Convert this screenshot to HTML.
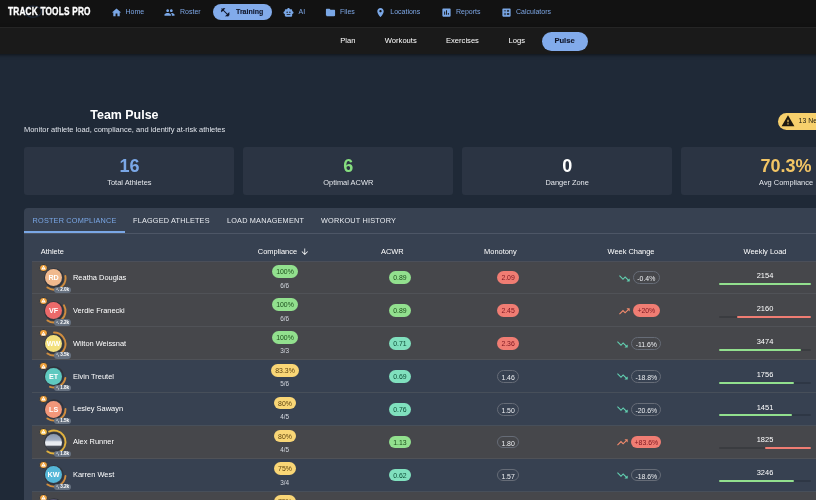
<!DOCTYPE html>
<html lang="en"><head><meta charset="utf-8"><title>Track Tools Pro - Team Pulse</title>
<style>
*{box-sizing:border-box;margin:0;padding:0}
html,body{width:816px;height:500px;overflow:hidden;background:#1f2937}
body{font-family:"Liberation Sans",Arial,sans-serif;color:#fff;position:relative}
#app{position:absolute;left:0;top:0;width:816px;height:500px;overflow:hidden;will-change:transform}
.abs,.ic,.t{position:absolute}
.t{white-space:nowrap;line-height:1}
.c{transform:translateX(-50%)}
.nav1{left:0;top:0;width:816px;height:27px;background:#121212}
.nav2{left:-10px;top:27px;width:836px;height:26.8px;background:#1a1a1a;border-top:1px solid #252525;box-shadow:0 1px 2px -.5px rgba(0,0,0,.25),0 2px 2.7px rgba(0,0,0,.16),0 .5px 5.3px rgba(0,0,0,.14)}
.nl{font-size:7px;color:#7da6e4;top:7.6px}
.sl{font-size:7.6px;color:#fff;top:37.1px}
.pill{border-radius:20px;background:#82abeb}
.card{top:146.8px;width:210.4px;height:47.8px;background:#2b3443;border-radius:3px}
.num{font-size:18px;font-weight:bold;top:156.8px}
.lab{font-size:7.44px;color:#e4e7ec;top:178.6px}
.panel{left:24px;top:208px;width:867px;height:320px;background:#374151;border-radius:4px 4px 0 0}
.tab{font-size:7.3px;top:216.7px;color:#e8ebf0;letter-spacing:.19px}
.th{font-size:7.44px;top:247.6px;color:#fff}
.row{left:32px;width:851px;height:32.86px;border-bottom:.7px solid rgba(96,99,106,.4)}
.hl{background:#46474b}
.name{font-size:7.44px;color:#fff;left:73px}
.chip{border-radius:10px;font-size:6.9px;text-align:center;color:rgba(0,0,0,.87);height:12.75px;line-height:14.4px}
.och{border:.55px solid #666c77;color:#eceef1;background:transparent;line-height:13.2px}
.sub{font-size:6.4px;color:#d5d9e0}
.val{font-size:7.44px;color:#fff}
.bar{height:2.1px;border-radius:1.1px}
.av{border-radius:50%;width:17.2px;height:17.2px;font-size:7.2px;font-weight:bold;color:#fff;text-align:center;line-height:17.2px}
.kp{border-radius:4px;background:#677281;height:6.4px;width:17.4px}
</style></head>
<body><div id="app">
<div class="abs nav1"></div><div class="abs nav2"></div>
<svg class="ic" style="left:22px;top:4px;width:28px;height:16px" viewBox="0 0 28 16"><ellipse cx="11" cy="7.6" rx="8.5" ry="5.6" fill="none" stroke="#1d293b" stroke-width="1.1"/></svg>
<div class="t" id="logo" style="left:8px;top:6.8px;font-size:10.3px;font-weight:bold;color:#fff;transform-origin:0 0;transform:scaleX(.802);letter-spacing:.25px;-webkit-text-stroke:.35px #fff">TRACK TOOLS PRO</div>
<div class="abs pill" style="left:213px;top:4px;width:59px;height:16px"></div>
<svg class="ic" style="left:110.8px;top:6.9px;width:11px;height:11px" viewBox="0 0 24 24"><path fill="#7aa7e6" d="M10 20v-6h4v6h5v-8h3L12 3 2 12h3v8z"/></svg>
<div class="t nl" style="left:125.5px">Home</div>
<svg class="ic" style="left:164px;top:6.9px;width:11px;height:11px" viewBox="0 0 24 24"><path fill="#7aa7e6" d="M16 11c1.66 0 2.99-1.34 2.99-3S17.66 5 16 5c-1.66 0-3 1.34-3 3s1.34 3 3 3zm-8 0c1.66 0 2.99-1.34 2.99-3S9.66 5 8 5C6.34 5 5 6.34 5 8s1.34 3 3 3zm0 2c-2.33 0-7 1.17-7 3.5V19h14v-2.5c0-2.33-4.67-3.5-7-3.5zm8 0c-.29 0-.62.02-.97.05 1.16.84 1.97 1.97 1.97 3.45V19h6v-2.5c0-2.33-4.67-3.5-7-3.5z"/></svg>
<div class="t nl" style="left:180px">Roster</div>
<svg class="ic" style="left:283.3px;top:6.9px;width:11px;height:11px" viewBox="0 0 24 24"><path fill="#7aa7e6" d="M20 9V7c0-1.1-.9-2-2-2h-3c0-1.66-1.34-3-3-3S9 3.34 9 5H6c-1.1 0-2 .9-2 2v2c-1.66 0-3 1.34-3 3s1.34 3 3 3v4c0 1.1.9 2 2 2h12c1.1 0 2-.9 2-2v-4c1.66 0 3-1.34 3-3s-1.34-3-3-3zM7.5 11.5c0-.83.67-1.5 1.5-1.5s1.5.67 1.5 1.5S9.83 13 9 13s-1.5-.67-1.5-1.5zM16 17H8v-2h8v2zm-1-4c-.83 0-1.5-.67-1.5-1.5S14.17 10 15 10s1.5.67 1.5 1.5S15.83 13 15 13z"/></svg>
<div class="t nl" style="left:298.5px">AI</div>
<svg class="ic" style="left:324.9px;top:6.9px;width:11px;height:11px" viewBox="0 0 24 24"><path fill="#7aa7e6" d="M10 4H4c-1.1 0-1.99.9-1.99 2L2 18c0 1.1.9 2 2 2h16c1.1 0 2-.9 2-2V8c0-1.1-.9-2-2-2h-8l-2-2z"/></svg>
<div class="t nl" style="left:340px">Files</div>
<svg class="ic" style="left:375.1px;top:6.9px;width:11px;height:11px" viewBox="0 0 24 24"><path fill="#7aa7e6" d="M12 2C8.13 2 5 5.13 5 9c0 5.25 7 13 7 13s7-7.75 7-13c0-3.870-3.13-7-7-7zm0 9.5c-1.38 0-2.5-1.12-2.5-2.5s1.12-2.5 2.5-2.5 2.5 1.12 2.5 2.5-1.12 2.5-2.5 2.5z"/></svg>
<div class="t nl" style="left:390.3px">Locations</div>
<svg class="ic" style="left:440.75px;top:6.9px;width:11px;height:11px" viewBox="0 0 24 24"><path fill="#7aa7e6" d="M19 3H5c-1.1 0-2 .9-2 2v14c0 1.1.9 2 2 2h14c1.1 0 2-.9 2-2V5c0-1.1-.9-2-2-2zM9 17H7v-7h2v7zm4 0h-2V7h2v10zm4 0h-2v-4h2v4z"/></svg>
<div class="t nl" style="left:456px">Reports</div>
<svg class="ic" style="left:500.75px;top:6.9px;width:11px;height:11px" viewBox="0 0 24 24"><path fill="#7aa7e6" d="M19 3H5c-1.1 0-2 .9-2 2v14c0 1.1.9 2 2 2h14c1.1 0 2-.9 2-2V5c0-1.1-.9-2-2-2zm-5.970 4.060L14.090 6l1.410 1.410L16.910 6l1.060 1.060-1.410 1.410 1.410 1.410-1.060 1.060-1.410-1.400-1.410 1.410-1.060-1.060 1.410-1.410-1.410-1.420zm-6.780.66h5v1.500h-5v-1.500zM11.500 16h-2v2H8v-2H6v-1.500h2v-2h1.500v2h2V16zm6.500 1.250h-5v-1.500h5v1.500zm0-2.500h-5v-1.500h5v1.500z"/></svg>
<div class="t nl" style="left:516px">Calculators</div>
<svg class="ic" style="left:220.4px;top:6.9px;width:10.6px;height:10.6px" viewBox="0 0 24 24"><path fill="#10162a" d="M20.57 14.86L22 13.43 20.57 12 17 15.57 8.43 7 12 3.43 10.57 2 9.14 3.43 7.71 2 5.57 4.14 4.14 2.71 2.71 4.14l1.43 1.43L2 7.71l1.43 1.43L2 10.57 3.43 12 7 8.43 15.57 17 12 20.57 13.43 22l1.43-1.43L16.29 22l2.14-2.14 1.43 1.43 1.43-1.43-1.43-1.43L22 16.29z"/></svg>
<div class="t nl" style="left:236px;color:#10162a;font-weight:bold;-webkit-text-stroke:.12px #10162a">Training</div>
<div class="t sl" style="left:340.2px">Plan</div>
<div class="t sl" style="left:384.8px">Workouts</div>
<div class="t sl" style="left:446px">Exercises</div>
<div class="t sl" style="left:508.5px">Logs</div>
<div class="abs pill" style="left:542.2px;top:31.8px;width:45.8px;height:18.8px"></div>
<div class="t sl" style="left:554.4px;color:#10162a;font-weight:bold;-webkit-text-stroke:.12px #10162a">Pulse</div>
<div class="t" style="left:90.3px;top:109.4px;font-size:12.45px;font-weight:bold;color:#fff">Team Pulse</div>
<div class="t" style="left:23.9px;top:125.5px;font-size:7.5px;color:#dfe3ea">Monitor athlete load, compliance, and identify at-risk athletes</div>
<div class="abs" style="left:777.7px;top:112.6px;width:80px;height:17px;border-radius:9px;background:#f7d06c"></div>
<svg class="ic" style="left:780.9px;top:114.2px;width:14px;height:14px" viewBox="0 0 24 24"><path fill="#1f1a10" d="M1 21h22L12 2 1 21zm12-3h-2v-2h2v2zm0-4h-2v-4h2v4z"/></svg>
<div class="t" style="left:798.6px;top:118.2px;font-size:6.9px;color:rgba(0,0,0,.87)">13 Needs Attention</div>
<div class="abs card" style="left:24px"></div>
<div class="t num c" style="left:129.4px;color:#7aa7e6">16</div>
<div class="t lab c" style="left:129.4px">Total Athletes</div>
<div class="abs card" style="left:242.9px"></div>
<div class="t num c" style="left:348.3px;color:#86dd7f">6</div>
<div class="t lab c" style="left:348.3px">Optimal ACWR</div>
<div class="abs card" style="left:461.8px"></div>
<div class="t num c" style="left:567.2px;color:#fff">0</div>
<div class="t lab c" style="left:567.2px">Danger Zone</div>
<div class="abs card" style="left:680.7px"></div>
<div class="t num c" style="left:786.1px;color:#f2c565">70.3%</div>
<div class="t lab c" style="left:786.1px">Avg Compliance</div>
<div class="abs panel"></div>
<div class="abs" style="left:24px;top:232.6px;width:867px;height:.8px;background:#4d5666"></div>
<div class="abs" style="left:24px;top:231px;width:100.6px;height:1.7px;background:#7aa7e6"></div>
<div class="t tab" style="left:32.6px;color:#7aa7e6">ROSTER COMPLIANCE</div>
<div class="t tab" style="left:133px;color:#e8ebf0">FLAGGED ATHLETES</div>
<div class="t tab" style="left:227px;color:#e8ebf0">LOAD MANAGEMENT</div>
<div class="t tab" style="left:321px;color:#e8ebf0">WORKOUT HISTORY</div>
<div class="t th" style="left:40.8px">Athlete</div>
<div class="t th" style="left:257.8px">Compliance</div>
<svg class="ic" style="left:300.1px;top:247px;width:9.56px;height:9.56px" viewBox="0 0 24 24"><path fill="#fff" d="M20 12l-1.410-1.410L13 16.170V4h-2v12.170l-5.580-5.590L4 12l8 8 8-8z"/></svg>
<div class="t th c" style="left:392.3px">ACWR</div>
<div class="t th c" style="left:500.4px">Monotony</div>
<div class="t th c" style="left:631px">Week Change</div>
<div class="t th c" style="left:765px">Weekly Load</div>
<div class="abs" style="left:32px;top:260.9px;width:851px;height:1px;background:#4b4f59"></div>
<div class="abs row hl" style="top:261.60px"></div>
<svg class="ic" style="left:40.6px;top:264.8px;width:26px;height:26px" viewBox="-13 -13 26 26"><circle r="9.2" fill="none" stroke="#30333a" stroke-width="1.3"/><path d="M11.33 -2.00A11.5 11.5 0 0 1 -6.60 9.42" fill="none" stroke="#d08d3e" stroke-width="1.9" stroke-linecap="round"/></svg>
<div class="abs av" style="left:45.0px;top:269.2px;background:#f0b98e">RD</div>
<div class="abs" style="left:39.449999999999996px;top:263.6px;width:8.2px;height:8.2px;border-radius:50%;background:#f0a23c;border:.6px solid #33373f"></div>
<svg class="ic" style="left:41.05px;top:265.0px;width:5px;height:5px" viewBox="0 0 24 24"><path fill="#fff" d="M1 21h22L12 2 1 21zm12-3h-2v-2h2v2zm0-4h-2v-4h2v4z"/></svg>
<div class="abs kp" style="left:53.5px;top:286.5px"></div>
<svg class="ic" style="left:55.6px;top:287.7px;width:3.8px;height:3.8px" viewBox="0 0 24 24"><path fill="#e8ebef" d="M20.57 14.86L22 13.43 20.57 12 17 15.57 8.43 7 12 3.43 10.57 2 9.14 3.43 7.71 2 5.57 4.14 4.14 2.71 2.71 4.14l1.43 1.43L2 7.71l1.43 1.43L2 10.57 3.43 12 7 8.43 15.57 17 12 20.57 13.43 22l1.43-1.43L16.29 22l2.14-2.14 1.43 1.43 1.43-1.43-1.43-1.43L22 16.29z"/></svg>
<div class="t" style="left:60.2px;top:287.7px;font-size:4.6px;font-weight:bold;color:#fff">2.0k</div>
<div class="t name" style="top:273.9px">Reatha Douglas</div>
<div class="abs chip" style="left:271.8px;top:265.3px;width:26.4px;background:#92e08e;color:#1c4f1c">100%</div>
<div class="t sub c" style="left:284.7px;top:282.6px">6/6</div>
<div class="abs chip" style="left:388.79999999999995px;top:271.4px;width:22.2px;background:#92e08e;color:#1c4f1c">0.89</div>
<div class="abs chip" style="left:497.20000000000005px;top:271.4px;width:21.8px;background:#f07d73;color:#7d1620">2.09</div>
<div class="abs chip och" style="left:633.08px;top:271.4px;width:26.5px;">-0.4%</div>
<svg class="ic" style="left:617.78px;top:271.8px;width:12.75px;height:12.75px" viewBox="0 0 24 24"><path fill="#62d2b2" d="M16 18l2.290-2.290-4.880-4.880-4 4L2 7.410 3.410 6l6 6 4-4 6.300 6.290L22 12v6z"/></svg>
<div class="t val c" style="left:765px;top:272.1px">2154</div>
<div class="abs bar" style="left:719px;top:283.0px;width:92px;background:rgba(20,22,28,.22)"></div>
<div class="abs bar" style="left:719px;top:283.0px;width:92px;background:#92e08e"></div>
<div class="abs row hl" style="top:294.46px"></div>
<svg class="ic" style="left:40.6px;top:297.7px;width:26px;height:26px" viewBox="-13 -13 26 26"><circle r="9.2" fill="none" stroke="#30333a" stroke-width="1.3"/><path d="M9.96 -5.75A11.5 11.5 0 0 1 -6.60 9.42" fill="none" stroke="#d08d3e" stroke-width="1.9" stroke-linecap="round"/></svg>
<div class="abs av" style="left:45.0px;top:302.1px;background:#ec6a6a">VF</div>
<div class="abs" style="left:39.449999999999996px;top:296.5px;width:8.2px;height:8.2px;border-radius:50%;background:#f0a23c;border:.6px solid #33373f"></div>
<svg class="ic" style="left:41.05px;top:297.9px;width:5px;height:5px" viewBox="0 0 24 24"><path fill="#fff" d="M1 21h22L12 2 1 21zm12-3h-2v-2h2v2zm0-4h-2v-4h2v4z"/></svg>
<div class="abs kp" style="left:53.5px;top:319.4px"></div>
<svg class="ic" style="left:55.6px;top:320.6px;width:3.8px;height:3.8px" viewBox="0 0 24 24"><path fill="#e8ebef" d="M20.57 14.86L22 13.43 20.57 12 17 15.57 8.43 7 12 3.43 10.57 2 9.14 3.43 7.71 2 5.57 4.14 4.14 2.71 2.71 4.14l1.43 1.43L2 7.71l1.43 1.43L2 10.57 3.43 12 7 8.43 15.57 17 12 20.57 13.43 22l1.43-1.43L16.29 22l2.14-2.14 1.43 1.43 1.43-1.43-1.43-1.43L22 16.29z"/></svg>
<div class="t" style="left:60.2px;top:320.6px;font-size:4.6px;font-weight:bold;color:#fff">2.2k</div>
<div class="t name" style="top:306.8px">Verdie Franecki</div>
<div class="abs chip" style="left:271.8px;top:298.2px;width:26.4px;background:#92e08e;color:#1c4f1c">100%</div>
<div class="t sub c" style="left:284.7px;top:315.5px">6/6</div>
<div class="abs chip" style="left:388.79999999999995px;top:304.3px;width:22.2px;background:#92e08e;color:#1c4f1c">0.89</div>
<div class="abs chip" style="left:497.20000000000005px;top:304.3px;width:21.8px;background:#f07d73;color:#7d1620">2.45</div>
<div class="abs chip" style="left:633.08px;top:304.3px;width:26.5px;background:#f07d73;color:#7d1620">+20%</div>
<svg class="ic" style="left:617.78px;top:304.7px;width:12.75px;height:12.75px" viewBox="0 0 24 24"><path fill="#f08a6c" d="M16 6l2.290 2.290-4.880 4.880-4-4L2 16.590 3.410 18l6-6 4 4 6.300-6.290L22 12V6z"/></svg>
<div class="t val c" style="left:765px;top:305.0px">2160</div>
<div class="abs bar" style="left:719px;top:315.9px;width:92px;background:rgba(20,22,28,.22)"></div>
<div class="abs bar" style="left:737px;top:315.9px;width:74px;background:#f07d73"></div>
<div class="abs row hl" style="top:327.31px"></div>
<svg class="ic" style="left:40.6px;top:330.5px;width:26px;height:26px" viewBox="-13 -13 26 26"><circle r="9.2" fill="none" stroke="#30333a" stroke-width="1.3"/><path d="M0.00 -11.50A11.5 11.5 0 1 1 -6.60 9.42" fill="none" stroke="#d08d3e" stroke-width="1.9" stroke-linecap="round"/></svg>
<div class="abs av" style="left:45.0px;top:334.9px;background:#f3e07c">WW</div>
<div class="abs" style="left:39.449999999999996px;top:329.3px;width:8.2px;height:8.2px;border-radius:50%;background:#f0a23c;border:.6px solid #33373f"></div>
<svg class="ic" style="left:41.05px;top:330.7px;width:5px;height:5px" viewBox="0 0 24 24"><path fill="#fff" d="M1 21h22L12 2 1 21zm12-3h-2v-2h2v2zm0-4h-2v-4h2v4z"/></svg>
<div class="abs kp" style="left:53.5px;top:352.2px"></div>
<svg class="ic" style="left:55.6px;top:353.4px;width:3.8px;height:3.8px" viewBox="0 0 24 24"><path fill="#e8ebef" d="M20.57 14.86L22 13.43 20.57 12 17 15.57 8.43 7 12 3.43 10.57 2 9.14 3.43 7.71 2 5.57 4.14 4.14 2.71 2.71 4.14l1.43 1.43L2 7.71l1.43 1.43L2 10.57 3.43 12 7 8.43 15.57 17 12 20.57 13.43 22l1.43-1.43L16.29 22l2.14-2.14 1.43 1.43 1.43-1.43-1.43-1.43L22 16.29z"/></svg>
<div class="t" style="left:60.2px;top:353.4px;font-size:4.6px;font-weight:bold;color:#fff">3.5k</div>
<div class="t name" style="top:339.6px">Wilton Weissnat</div>
<div class="abs chip" style="left:271.8px;top:331.0px;width:26.4px;background:#92e08e;color:#1c4f1c">100%</div>
<div class="t sub c" style="left:284.7px;top:348.3px">3/3</div>
<div class="abs chip" style="left:388.79999999999995px;top:337.1px;width:22.2px;background:#80e0be;color:#0d4f38">0.71</div>
<div class="abs chip" style="left:497.20000000000005px;top:337.1px;width:21.8px;background:#f07d73;color:#7d1620">2.36</div>
<div class="abs chip och" style="left:631.38px;top:337.1px;width:29.9px;">-11.6%</div>
<svg class="ic" style="left:616.08px;top:337.5px;width:12.75px;height:12.75px" viewBox="0 0 24 24"><path fill="#62d2b2" d="M16 18l2.290-2.290-4.880-4.880-4 4L2 7.410 3.410 6l6 6 4-4 6.300 6.290L22 12v6z"/></svg>
<div class="t val c" style="left:765px;top:337.8px">3474</div>
<div class="abs bar" style="left:719px;top:348.7px;width:92px;background:rgba(20,22,28,.22)"></div>
<div class="abs bar" style="left:719px;top:348.7px;width:82px;background:#92e08e"></div>
<div class="abs row" style="top:360.17px"></div>
<svg class="ic" style="left:40.6px;top:363.4px;width:26px;height:26px" viewBox="-13 -13 26 26"><circle r="9.2" fill="none" stroke="#30333a" stroke-width="1.3"/><path d="M11.33 2.00A11.5 11.5 0 0 1 -3.93 10.81" fill="none" stroke="#d08d3e" stroke-width="1.9" stroke-linecap="round"/></svg>
<div class="abs av" style="left:45.0px;top:367.8px;background:#5fc9c0">ET</div>
<div class="abs" style="left:39.449999999999996px;top:362.2px;width:8.2px;height:8.2px;border-radius:50%;background:#f0a23c;border:.6px solid #33373f"></div>
<svg class="ic" style="left:41.05px;top:363.6px;width:5px;height:5px" viewBox="0 0 24 24"><path fill="#fff" d="M1 21h22L12 2 1 21zm12-3h-2v-2h2v2zm0-4h-2v-4h2v4z"/></svg>
<div class="abs kp" style="left:53.5px;top:385.1px"></div>
<svg class="ic" style="left:55.6px;top:386.3px;width:3.8px;height:3.8px" viewBox="0 0 24 24"><path fill="#e8ebef" d="M20.57 14.86L22 13.43 20.57 12 17 15.57 8.43 7 12 3.43 10.57 2 9.14 3.43 7.71 2 5.57 4.14 4.14 2.71 2.71 4.14l1.43 1.43L2 7.71l1.43 1.43L2 10.57 3.43 12 7 8.43 15.57 17 12 20.57 13.43 22l1.43-1.43L16.29 22l2.14-2.14 1.43 1.43 1.43-1.43-1.43-1.43L22 16.29z"/></svg>
<div class="t" style="left:60.2px;top:386.3px;font-size:4.6px;font-weight:bold;color:#fff">1.8k</div>
<div class="t name" style="top:372.5px">Elvin Treutel</div>
<div class="abs chip" style="left:270.75px;top:363.9px;width:28.5px;background:#f9d676;color:#5e4410">83.3%</div>
<div class="t sub c" style="left:284.7px;top:381.2px">5/6</div>
<div class="abs chip" style="left:388.79999999999995px;top:370.0px;width:22.2px;background:#80e0be;color:#0d4f38">0.69</div>
<div class="abs chip och" style="left:497.20000000000005px;top:370.0px;width:21.8px;">1.46</div>
<div class="abs chip och" style="left:631.38px;top:370.0px;width:29.9px;">-18.8%</div>
<svg class="ic" style="left:616.08px;top:370.4px;width:12.75px;height:12.75px" viewBox="0 0 24 24"><path fill="#62d2b2" d="M16 18l2.290-2.290-4.880-4.880-4 4L2 7.410 3.410 6l6 6 4-4 6.300 6.290L22 12v6z"/></svg>
<div class="t val c" style="left:765px;top:370.7px">1756</div>
<div class="abs bar" style="left:719px;top:381.6px;width:92px;background:rgba(20,22,28,.22)"></div>
<div class="abs bar" style="left:719px;top:381.6px;width:75px;background:#92e08e"></div>
<div class="abs row" style="top:393.03px"></div>
<svg class="ic" style="left:40.6px;top:396.2px;width:26px;height:26px" viewBox="-13 -13 26 26"><circle r="9.2" fill="none" stroke="#30333a" stroke-width="1.3"/><path d="M11.50 -0.00A11.5 11.5 0 0 1 -6.60 9.42" fill="none" stroke="#d08d3e" stroke-width="1.9" stroke-linecap="round"/></svg>
<div class="abs av" style="left:45.0px;top:400.6px;background:#f2977a">LS</div>
<div class="abs" style="left:39.449999999999996px;top:395.0px;width:8.2px;height:8.2px;border-radius:50%;background:#f0a23c;border:.6px solid #33373f"></div>
<svg class="ic" style="left:41.05px;top:396.4px;width:5px;height:5px" viewBox="0 0 24 24"><path fill="#fff" d="M1 21h22L12 2 1 21zm12-3h-2v-2h2v2zm0-4h-2v-4h2v4z"/></svg>
<div class="abs kp" style="left:53.5px;top:417.9px"></div>
<svg class="ic" style="left:55.6px;top:419.1px;width:3.8px;height:3.8px" viewBox="0 0 24 24"><path fill="#e8ebef" d="M20.57 14.86L22 13.43 20.57 12 17 15.57 8.43 7 12 3.43 10.57 2 9.14 3.43 7.71 2 5.57 4.14 4.14 2.71 2.71 4.14l1.43 1.43L2 7.71l1.43 1.43L2 10.57 3.43 12 7 8.43 15.57 17 12 20.57 13.43 22l1.43-1.43L16.29 22l2.14-2.14 1.43 1.43 1.43-1.43-1.43-1.43L22 16.29z"/></svg>
<div class="t" style="left:60.2px;top:419.1px;font-size:4.6px;font-weight:bold;color:#fff">1.5k</div>
<div class="t name" style="top:405.3px">Lesley Sawayn</div>
<div class="abs chip" style="left:273.8px;top:396.7px;width:22.4px;background:#f9d676;color:#5e4410">80%</div>
<div class="t sub c" style="left:284.7px;top:414.0px">4/5</div>
<div class="abs chip" style="left:388.79999999999995px;top:402.8px;width:22.2px;background:#80e0be;color:#0d4f38">0.76</div>
<div class="abs chip och" style="left:497.20000000000005px;top:402.8px;width:21.8px;">1.50</div>
<div class="abs chip och" style="left:631.38px;top:402.8px;width:29.9px;">-20.6%</div>
<svg class="ic" style="left:616.08px;top:403.2px;width:12.75px;height:12.75px" viewBox="0 0 24 24"><path fill="#62d2b2" d="M16 18l2.290-2.290-4.880-4.880-4 4L2 7.410 3.410 6l6 6 4-4 6.300 6.290L22 12v6z"/></svg>
<div class="t val c" style="left:765px;top:403.5px">1451</div>
<div class="abs bar" style="left:719px;top:414.4px;width:92px;background:rgba(20,22,28,.22)"></div>
<div class="abs bar" style="left:719px;top:414.4px;width:73px;background:#92e08e"></div>
<div class="abs row hl" style="top:425.88px"></div>
<svg class="ic" style="left:40.6px;top:429.1px;width:26px;height:26px" viewBox="-13 -13 26 26"><circle r="9.2" fill="none" stroke="#30333a" stroke-width="1.3"/><path d="M-4.86 -10.42A11.5 11.5 0 1 1 -6.60 9.42" fill="none" stroke="#e2b23e" stroke-width="1.9" stroke-linecap="round"/></svg>
<div class="abs av" style="left:45.0px;top:433.5px;background:linear-gradient(180deg,#8896ab 0%,#a3afc2 36%,#e6eaf0 46%,#eceff4 66%,#4e535d 71%,#2e3239 100%)"></div>
<div class="abs" style="left:39.449999999999996px;top:427.9px;width:8.2px;height:8.2px;border-radius:50%;background:#f2b63a;border:.6px solid #33373f"></div>
<svg class="ic" style="left:41.05px;top:429.3px;width:5px;height:5px" viewBox="0 0 24 24"><path fill="#fff" d="M1 21h22L12 2 1 21zm12-3h-2v-2h2v2zm0-4h-2v-4h2v4z"/></svg>
<div class="abs kp" style="left:53.5px;top:450.8px"></div>
<svg class="ic" style="left:55.6px;top:452.0px;width:3.8px;height:3.8px" viewBox="0 0 24 24"><path fill="#e8ebef" d="M20.57 14.86L22 13.43 20.57 12 17 15.57 8.43 7 12 3.43 10.57 2 9.14 3.43 7.71 2 5.57 4.14 4.14 2.71 2.71 4.14l1.43 1.43L2 7.71l1.43 1.43L2 10.57 3.43 12 7 8.43 15.57 17 12 20.57 13.43 22l1.43-1.43L16.29 22l2.14-2.14 1.43 1.43 1.43-1.43-1.43-1.43L22 16.29z"/></svg>
<div class="t" style="left:60.2px;top:452.0px;font-size:4.6px;font-weight:bold;color:#fff">1.8k</div>
<div class="t name" style="top:438.2px">Alex Runner</div>
<div class="abs chip" style="left:273.8px;top:429.6px;width:22.4px;background:#f9d676;color:#5e4410">80%</div>
<div class="t sub c" style="left:284.7px;top:446.9px">4/5</div>
<div class="abs chip" style="left:388.79999999999995px;top:435.7px;width:22.2px;background:#92e08e;color:#1c4f1c">1.13</div>
<div class="abs chip och" style="left:497.20000000000005px;top:435.7px;width:21.8px;">1.80</div>
<div class="abs chip" style="left:631.38px;top:435.7px;width:29.9px;background:#f07d73;color:#7d1620">+83.6%</div>
<svg class="ic" style="left:616.08px;top:436.1px;width:12.75px;height:12.75px" viewBox="0 0 24 24"><path fill="#f08a6c" d="M16 6l2.290 2.290-4.880 4.880-4-4L2 16.590 3.410 18l6-6 4 4 6.300-6.290L22 12V6z"/></svg>
<div class="t val c" style="left:765px;top:436.4px">1825</div>
<div class="abs bar" style="left:719px;top:447.3px;width:92px;background:rgba(20,22,28,.22)"></div>
<div class="abs bar" style="left:765px;top:447.3px;width:46px;background:#f07d73"></div>
<div class="abs row" style="top:458.74px"></div>
<svg class="ic" style="left:40.6px;top:461.9px;width:26px;height:26px" viewBox="-13 -13 26 26"><circle r="9.2" fill="none" stroke="#30333a" stroke-width="1.3"/><path d="M11.46 1.00A11.5 11.5 0 0 1 -6.60 9.42" fill="none" stroke="#d08d3e" stroke-width="1.9" stroke-linecap="round"/></svg>
<div class="abs av" style="left:45.0px;top:466.3px;background:#55b7d8">KW</div>
<div class="abs" style="left:39.449999999999996px;top:460.7px;width:8.2px;height:8.2px;border-radius:50%;background:#f0a23c;border:.6px solid #33373f"></div>
<svg class="ic" style="left:41.05px;top:462.1px;width:5px;height:5px" viewBox="0 0 24 24"><path fill="#fff" d="M1 21h22L12 2 1 21zm12-3h-2v-2h2v2zm0-4h-2v-4h2v4z"/></svg>
<div class="abs kp" style="left:53.5px;top:483.6px"></div>
<svg class="ic" style="left:55.6px;top:484.8px;width:3.8px;height:3.8px" viewBox="0 0 24 24"><path fill="#e8ebef" d="M20.57 14.86L22 13.43 20.57 12 17 15.57 8.43 7 12 3.43 10.57 2 9.14 3.43 7.71 2 5.57 4.14 4.14 2.71 2.71 4.14l1.43 1.43L2 7.71l1.43 1.43L2 10.57 3.43 12 7 8.43 15.57 17 12 20.57 13.43 22l1.43-1.43L16.29 22l2.14-2.14 1.43 1.43 1.43-1.43-1.43-1.43L22 16.29z"/></svg>
<div class="t" style="left:60.2px;top:484.8px;font-size:4.6px;font-weight:bold;color:#fff">3.2k</div>
<div class="t name" style="top:471.0px">Karren West</div>
<div class="abs chip" style="left:273.8px;top:462.4px;width:22.4px;background:#f9d676;color:#5e4410">75%</div>
<div class="t sub c" style="left:284.7px;top:479.7px">3/4</div>
<div class="abs chip" style="left:388.79999999999995px;top:468.5px;width:22.2px;background:#80e0be;color:#0d4f38">0.62</div>
<div class="abs chip och" style="left:497.20000000000005px;top:468.5px;width:21.8px;">1.57</div>
<div class="abs chip och" style="left:631.38px;top:468.5px;width:29.9px;">-18.6%</div>
<svg class="ic" style="left:616.08px;top:468.9px;width:12.75px;height:12.75px" viewBox="0 0 24 24"><path fill="#62d2b2" d="M16 18l2.290-2.290-4.880-4.880-4 4L2 7.410 3.410 6l6 6 4-4 6.300 6.290L22 12v6z"/></svg>
<div class="t val c" style="left:765px;top:469.2px">3246</div>
<div class="abs bar" style="left:719px;top:480.1px;width:92px;background:rgba(20,22,28,.22)"></div>
<div class="abs bar" style="left:719px;top:480.1px;width:75px;background:#92e08e"></div>
<div class="abs row hl" style="top:491.60px"></div>
<svg class="ic" style="left:40.6px;top:494.8px;width:26px;height:26px" viewBox="-13 -13 26 26"><circle r="9.2" fill="none" stroke="#30333a" stroke-width="1.3"/><path d="M11.33 -2.00A11.5 11.5 0 0 1 -6.60 9.42" fill="none" stroke="#d08d3e" stroke-width="1.9" stroke-linecap="round"/></svg>
<div class="abs av" style="left:45.0px;top:499.2px;background:#55536e"></div>
<div class="abs" style="left:39.449999999999996px;top:493.6px;width:8.2px;height:8.2px;border-radius:50%;background:#f0a23c;border:.6px solid #33373f"></div>
<svg class="ic" style="left:41.05px;top:495.0px;width:5px;height:5px" viewBox="0 0 24 24"><path fill="#fff" d="M1 21h22L12 2 1 21zm12-3h-2v-2h2v2zm0-4h-2v-4h2v4z"/></svg>
<div class="abs chip" style="left:273.8px;top:495.3px;width:22.4px;background:#f9d676;color:#5e4410">75%</div>
</div></body></html>
